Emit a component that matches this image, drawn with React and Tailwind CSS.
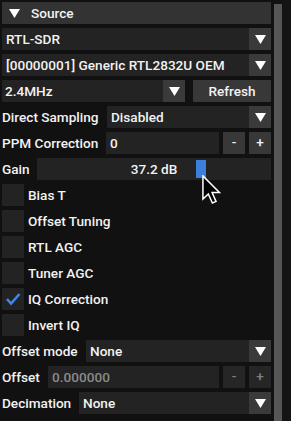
import React from 'react'

const Arrow = () => (
  <svg width="11" height="9" viewBox="0 0 11 9" aria-hidden="true">
    <polygon points="0,0 11,0 5.5,9" fill="#ffffff" />
  </svg>
)

const Combo = ({ value }) => (
  <div className="flex h-[22px] grow basis-0 items-stretch bg-[#232323]">
    <span className="flex flex-1 items-center pl-[4px] pt-[1px]">{value}</span>
    <span className="flex w-[22px] items-center justify-center bg-[#3a3a3a]">
      <Arrow />
    </span>
  </div>
)

const Row = ({ label, width, children }) => (
  <div className="flex h-[22px] shrink-0 items-center">
    <span className="shrink-0 pt-[1px]" style={{ width }}>{label}</span>
    {children}
  </div>
)

const Check = ({ label, checked }) => (
  <div className="flex h-[22px] shrink-0 items-center gap-[4px]">
    <span className="flex h-[22px] w-[22px] items-center justify-center bg-[#232323]">
      {checked && (
        <svg width="16" height="14" viewBox="0 0 16 14" aria-hidden="true">
          <polyline points="2,7 6,11.5 14.5,2" fill="none" stroke="#3f86e6" strokeWidth="2.6" />
        </svg>
      )}
    </span>
    <span className="pt-[1px]">{label}</span>
  </div>
)

const Stepper = ({ value, disabled }) => (
  <>
    <div className={`flex h-[22px] flex-1 items-center pl-[4px] pt-[1px] bg-[#232323] ${disabled ? 'text-[#8a8a8a]' : ''}`}>
      {value}
    </div>
    <button className={`ml-[4px] flex h-[22px] w-[22px] items-center justify-center ${disabled ? 'bg-[#262626] text-[#808080]' : 'bg-[#383838]'}`}>
      -
    </button>
    <button className={`ml-[4px] flex h-[22px] w-[22px] items-center justify-center ${disabled ? 'bg-[#262626] text-[#808080]' : 'bg-[#383838]'}`}>
      +
    </button>
  </>
)

export default function App() {
  return (
    <div
      className="relative flex h-[421px] w-[291px] items-start overflow-hidden bg-[#111111] text-[13.6px] font-medium leading-none text-[#f2f2f2]"
      style={{ fontFamily: 'Roboto, "Noto Sans", sans-serif' }}
    >
      <div className="ml-[2px] mt-[2px] flex w-[269px] flex-col gap-[4px]">
        {/* header */}
        <div className="flex h-[22px] shrink-0 items-center bg-[#333333] pl-[7px]">
          <Arrow />
          <span className="ml-[11px] pt-[1px]">Source</span>
        </div>

        <div className="flex h-[22px] shrink-0">
          <Combo value="RTL-SDR" />
        </div>
        <div className="flex h-[22px] shrink-0">
          <Combo value="[00000001] Generic RTL2832U OEM" />
        </div>

        <div className="flex h-[22px] shrink-0">
          <div className="flex w-[183px] items-stretch bg-[#232323]">
            <span className="flex flex-1 items-center pl-[3px] pt-[1px]">2.4MHz</span>
            <span className="flex w-[22px] items-center justify-center bg-[#3a3a3a]">
              <Arrow />
            </span>
          </div>
          <button className="ml-[8px] flex flex-1 items-center justify-center bg-[#383838] pt-[1px]">Refresh</button>
        </div>

        <Row label="Direct Sampling" width={105}>
          <Combo value="Disabled" />
        </Row>

        <Row label="PPM Correction" width={104}>
          <Stepper value="0" />
        </Row>

        <Row label="Gain" width={35}>
          <div className="relative flex h-[22px] flex-1 items-center justify-center bg-[#232323] pt-[1px]">
            <span>37.2 dB</span>
            <span className="absolute left-[159px] top-[2px] h-[18px] w-[10px] bg-[#3d80dc]" />
          </div>
        </Row>

        <Check label="Bias T" />
        <Check label="Offset Tuning" />
        <Check label="RTL AGC" />
        <Check label="Tuner AGC" />
        <Check label="IQ Correction" checked />
        <Check label="Invert IQ" />

        <Row label="Offset mode" width={84}>
          <Combo value="None" />
        </Row>

        <Row label="Offset" width={46}>
          <Stepper value="0.000000" disabled />
        </Row>

        <Row label="Decimation" width={77}>
          <Combo value="None" />
        </Row>
      </div>

      {/* scrollbar */}
      <div className="ml-[3px] mt-[4px] h-[417px] w-[8px] bg-[#565656]" />
      <div className="h-[421px] flex-1 bg-[#141414]" />

      {/* mouse cursor */}
      <svg
        className="absolute left-[202px] top-[175px]"
        width="19"
        height="29"
        viewBox="0 0 12.6 19.3"
        aria-hidden="true"
      >
        <polygon
          points="0.6,0.6 0.6,16 4.2,12.6 6.9,18.6 9.3,17.6 6.7,11.7 11.6,11.7"
          fill="#000000"
          stroke="#ffffff"
          strokeWidth="1"
          strokeLinejoin="miter"
        />
      </svg>
    </div>
  )
}
